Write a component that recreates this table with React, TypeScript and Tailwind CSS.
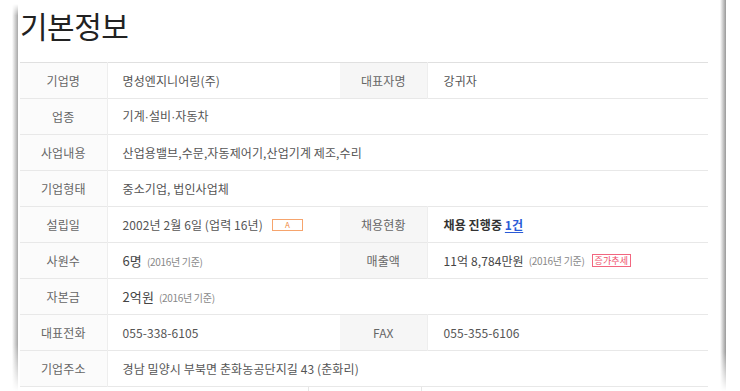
import React from 'react';

type Cell = { label: string; value: React.ReactNode };
type Row = { left: Cell; right?: Cell };

const Basis = () => (
  <span className="ml-[5px] text-[10px] text-[#888] tracking-[-0.3px]">(2016년 기준)</span>
);

// narrow middle dot between words
const Dot = () => <span style={{ fontFamily: '"Liberation Sans", sans-serif' }}>·</span>;

const rows: Row[] = [
  { left: { label: '기업명', value: '명성엔지니어링(주)' }, right: { label: '대표자명', value: '강귀자' } },
  {
    left: {
      label: '업종',
      value: (
        <span>
          기계<Dot />설비<Dot />자동차
        </span>
      ),
    },
  },
  { left: { label: '사업내용', value: '산업용밸브,수문,자동제어기,산업기계 제조,수리' } },
  { left: { label: '기업형태', value: '중소기업, 법인사업체' } },
  {
    left: {
      label: '설립일',
      value: (
        <span className="flex items-center">
          2002년 2월 6일 (업력 16년)
          <span className="ml-[9px] inline-flex h-[12px] w-[31px] items-center justify-center border border-[#f6a46d] text-[8px] leading-none text-[#f08a43]">
            A
          </span>
        </span>
      ),
    },
    right: {
      label: '채용현황',
      value: (
        <span className="font-semibold text-[#333]">
          채용 진행중 <span className="text-[#2a5bd7] underline underline-offset-2">1건</span>
        </span>
      ),
    },
  },
  {
    left: {
      label: '사원수',
      value: (
        <span>
          <span className="text-[13px] text-[#444]">6명</span>
          <Basis />
        </span>
      ),
    },
    right: {
      label: '매출액',
      value: (
        <span className="flex items-center">
          <span className="text-[#444]">11억 8,784만원</span>
          <Basis />
          <span className="ml-[7px] inline-flex h-[13px] items-center border border-[#f2667f] px-[2px] text-[9px] leading-none text-[#ee4f6b]">
            증가추세
          </span>
        </span>
      ),
    },
  },
  {
    left: {
      label: '자본금',
      value: (
        <span>
          <span className="text-[13px] text-[#444]">2억원</span>
          <Basis />
        </span>
      ),
    },
  },
  { left: { label: '대표전화', value: '055-338-6105' }, right: { label: 'FAX', value: '055-355-6106' } },
  { left: { label: '기업주소', value: '경남 밀양시 부북면 춘화농공단지길 43 (춘화리)' } },
];

export default function App() {
  return (
    <div
      className="flex h-[391px] w-[740px] overflow-hidden bg-white"
      style={{ fontFamily: '"Noto Sans CJK KR", "Noto Sans", sans-serif' }}
    >
      <div className="w-[12px] shrink-0" />
      {/* page edge shadows */}
      <div className="mt-[4px] w-[6px] shrink-0 bg-gradient-to-r from-white to-[#a8a8a8] [mask-image:linear-gradient(to_bottom,transparent,black_3%,black_88%,transparent)]" />

      <div className="w-[702px] shrink-0 pl-[2px]">
        <h1 className="flex h-[62px] items-start pt-[5px] text-[30px] font-normal leading-[40px] tracking-[-0.5px] text-[#222]">
          기본정보
        </h1>

        <table className="w-[688px] table-fixed border-collapse border-t border-[#e0e0e0] text-[12px] tracking-[0.1px]">
          <colgroup>
            <col className="w-[87px]" />
            <col className="w-[233px]" />
            <col className="w-[87px]" />
            <col className="w-[281px]" />
          </colgroup>
          <tbody>
            {rows.map((row) => (
              <tr key={row.left.label} className="h-[36px] border-b border-[#e8e8e8]">
                <th className="border-r border-[#eeeeee] bg-[#fbfbfb] text-center font-normal text-[#666]">
                  {row.left.label}
                </th>
                <td
                  colSpan={row.right ? 1 : 3}
                  className="pl-[15px] text-[#555] whitespace-nowrap"
                >
                  {row.left.value}
                </td>
                {row.right && (
                  <>
                    <th className="border-r border-[#eeeeee] bg-[#f6f6f6] text-center font-normal text-[#666]">
                      {row.right.label}
                    </th>
                    <td className="pl-[16px] text-[#555] whitespace-nowrap">{row.right.value}</td>
                  </>
                )}
              </tr>
            ))}
          </tbody>
        </table>

        <div className="flex h-[6px]">
          <div className="w-[288px]" />
          <div className="w-[114px] border-x border-[#e6e6e6]" />
        </div>
      </div>

      <div className="w-[6px] shrink-0 bg-gradient-to-r from-white to-[#999] [mask-image:linear-gradient(to_bottom,black_90%,transparent)]" />
    </div>
  );
}
